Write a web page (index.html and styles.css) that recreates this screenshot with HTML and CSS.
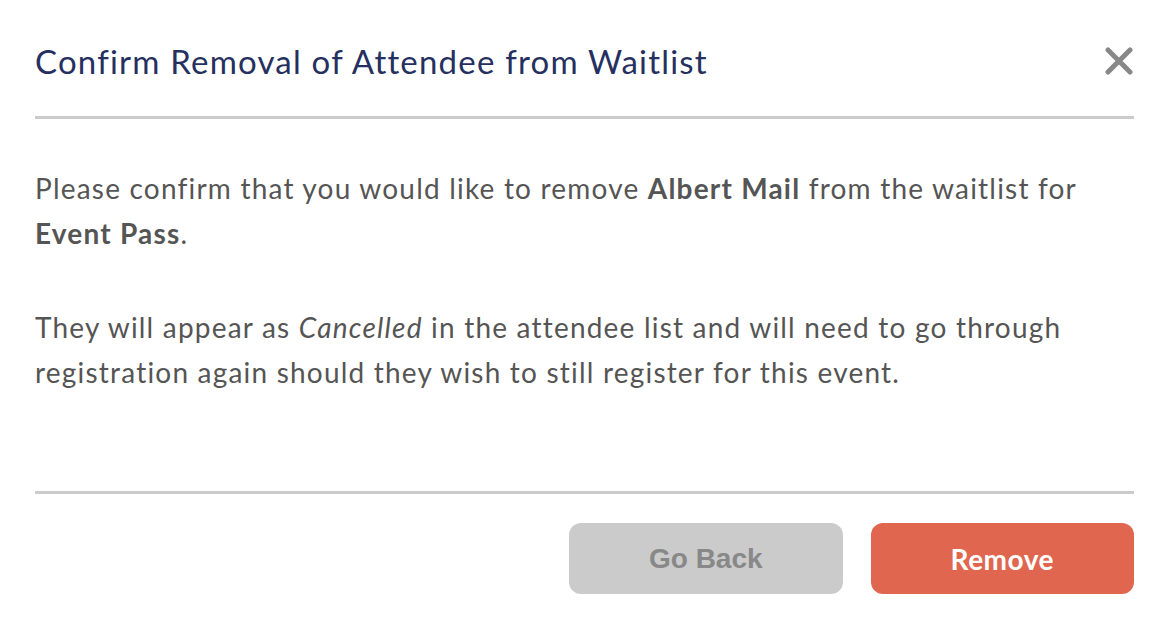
FILE: index.html
```html
<!DOCTYPE html>
<html lang="en">
<head>
    <meta charset="UTF-8">
    <title>Confirm Removal</title>
    <link rel="stylesheet" href="styles.css">
</head>
<body>
    <div class="modal">
        <div class="modal-header">
            <h2>Confirm Removal of Attendee from Waitlist</h2>
            <button class="close-btn" type="button" aria-label="Close">
                <svg width="28" height="28" viewBox="0 0 28 28">
                    <path d="M3 3 L25 25 M25 3 L3 25" stroke="#888" stroke-width="5" stroke-linecap="round" fill="none"/>
                </svg>
            </button>
        </div>
        <div class="modal-body">
            <p>Please confirm that you would like to remove <strong>Albert Mail</strong> from the waitlist for <strong>Event Pass</strong>.</p>
            <p>They will appear as <em>Cancelled</em> in the attendee list and will need to go through registration again should they wish to still register for this event.</p>
        </div>
        <div class="modal-footer">
            <button class="btn btn-back" type="button">Go Back</button>
            <button class="btn btn-remove" type="button">Remove</button>
        </div>
    </div>
</body>
</html>
```

FILE: styles.css
```css
body {
    margin: 0;
    background: #fff;
    font-family: 'Lato', Arial, sans-serif;
}
.modal {
    padding: 0 36px 0 35px;
}
.modal-header {
    display: flex;
    align-items: center;
    justify-content: space-between;
    height: 116px;
    border-bottom: 3px solid #cbcbcb;
}
.modal-header h2 {
    margin: 0;
    padding-top: 6px;
    font-size: 33px;
    font-weight: 400;
    letter-spacing: 1.2px;
    color: #26305f;
}
.close-btn {
    border: none;
    background: none;
    padding: 0;
    margin-right: 1px;
    margin-top: 5px;
    cursor: pointer;
    display: flex;
}
.modal-body {
    padding: 47px 0 96px;
    border-bottom: 3px solid #cbcbcb;
    color: #555;
    font-size: 28px;
    letter-spacing: 1.2px;
    line-height: 45px;
}
.modal-body p {
    margin: 0 0 49px 0;
}
.modal-body p:last-child {
    margin-bottom: 0;
}
.modal-body strong {
    font-weight: 700;
}
.modal-footer {
    display: flex;
    justify-content: flex-end;
    gap: 28px;
    padding-top: 29px;
}
.btn {
    height: 71px;
    padding: 0 80px;
    border: none;
    border-radius: 12px;
    font-size: 28px;
    font-weight: 700;
    cursor: pointer;
}
.btn-back {
    background: #cbcbcb;
    color: #888;
    font-family: 'Liberation Sans', Arial, sans-serif;
}
.btn-remove {
    background: #e0664f;
    color: #fff;
    font-family: 'Lato', Arial, sans-serif;
    letter-spacing: 0.5px;
}
```
